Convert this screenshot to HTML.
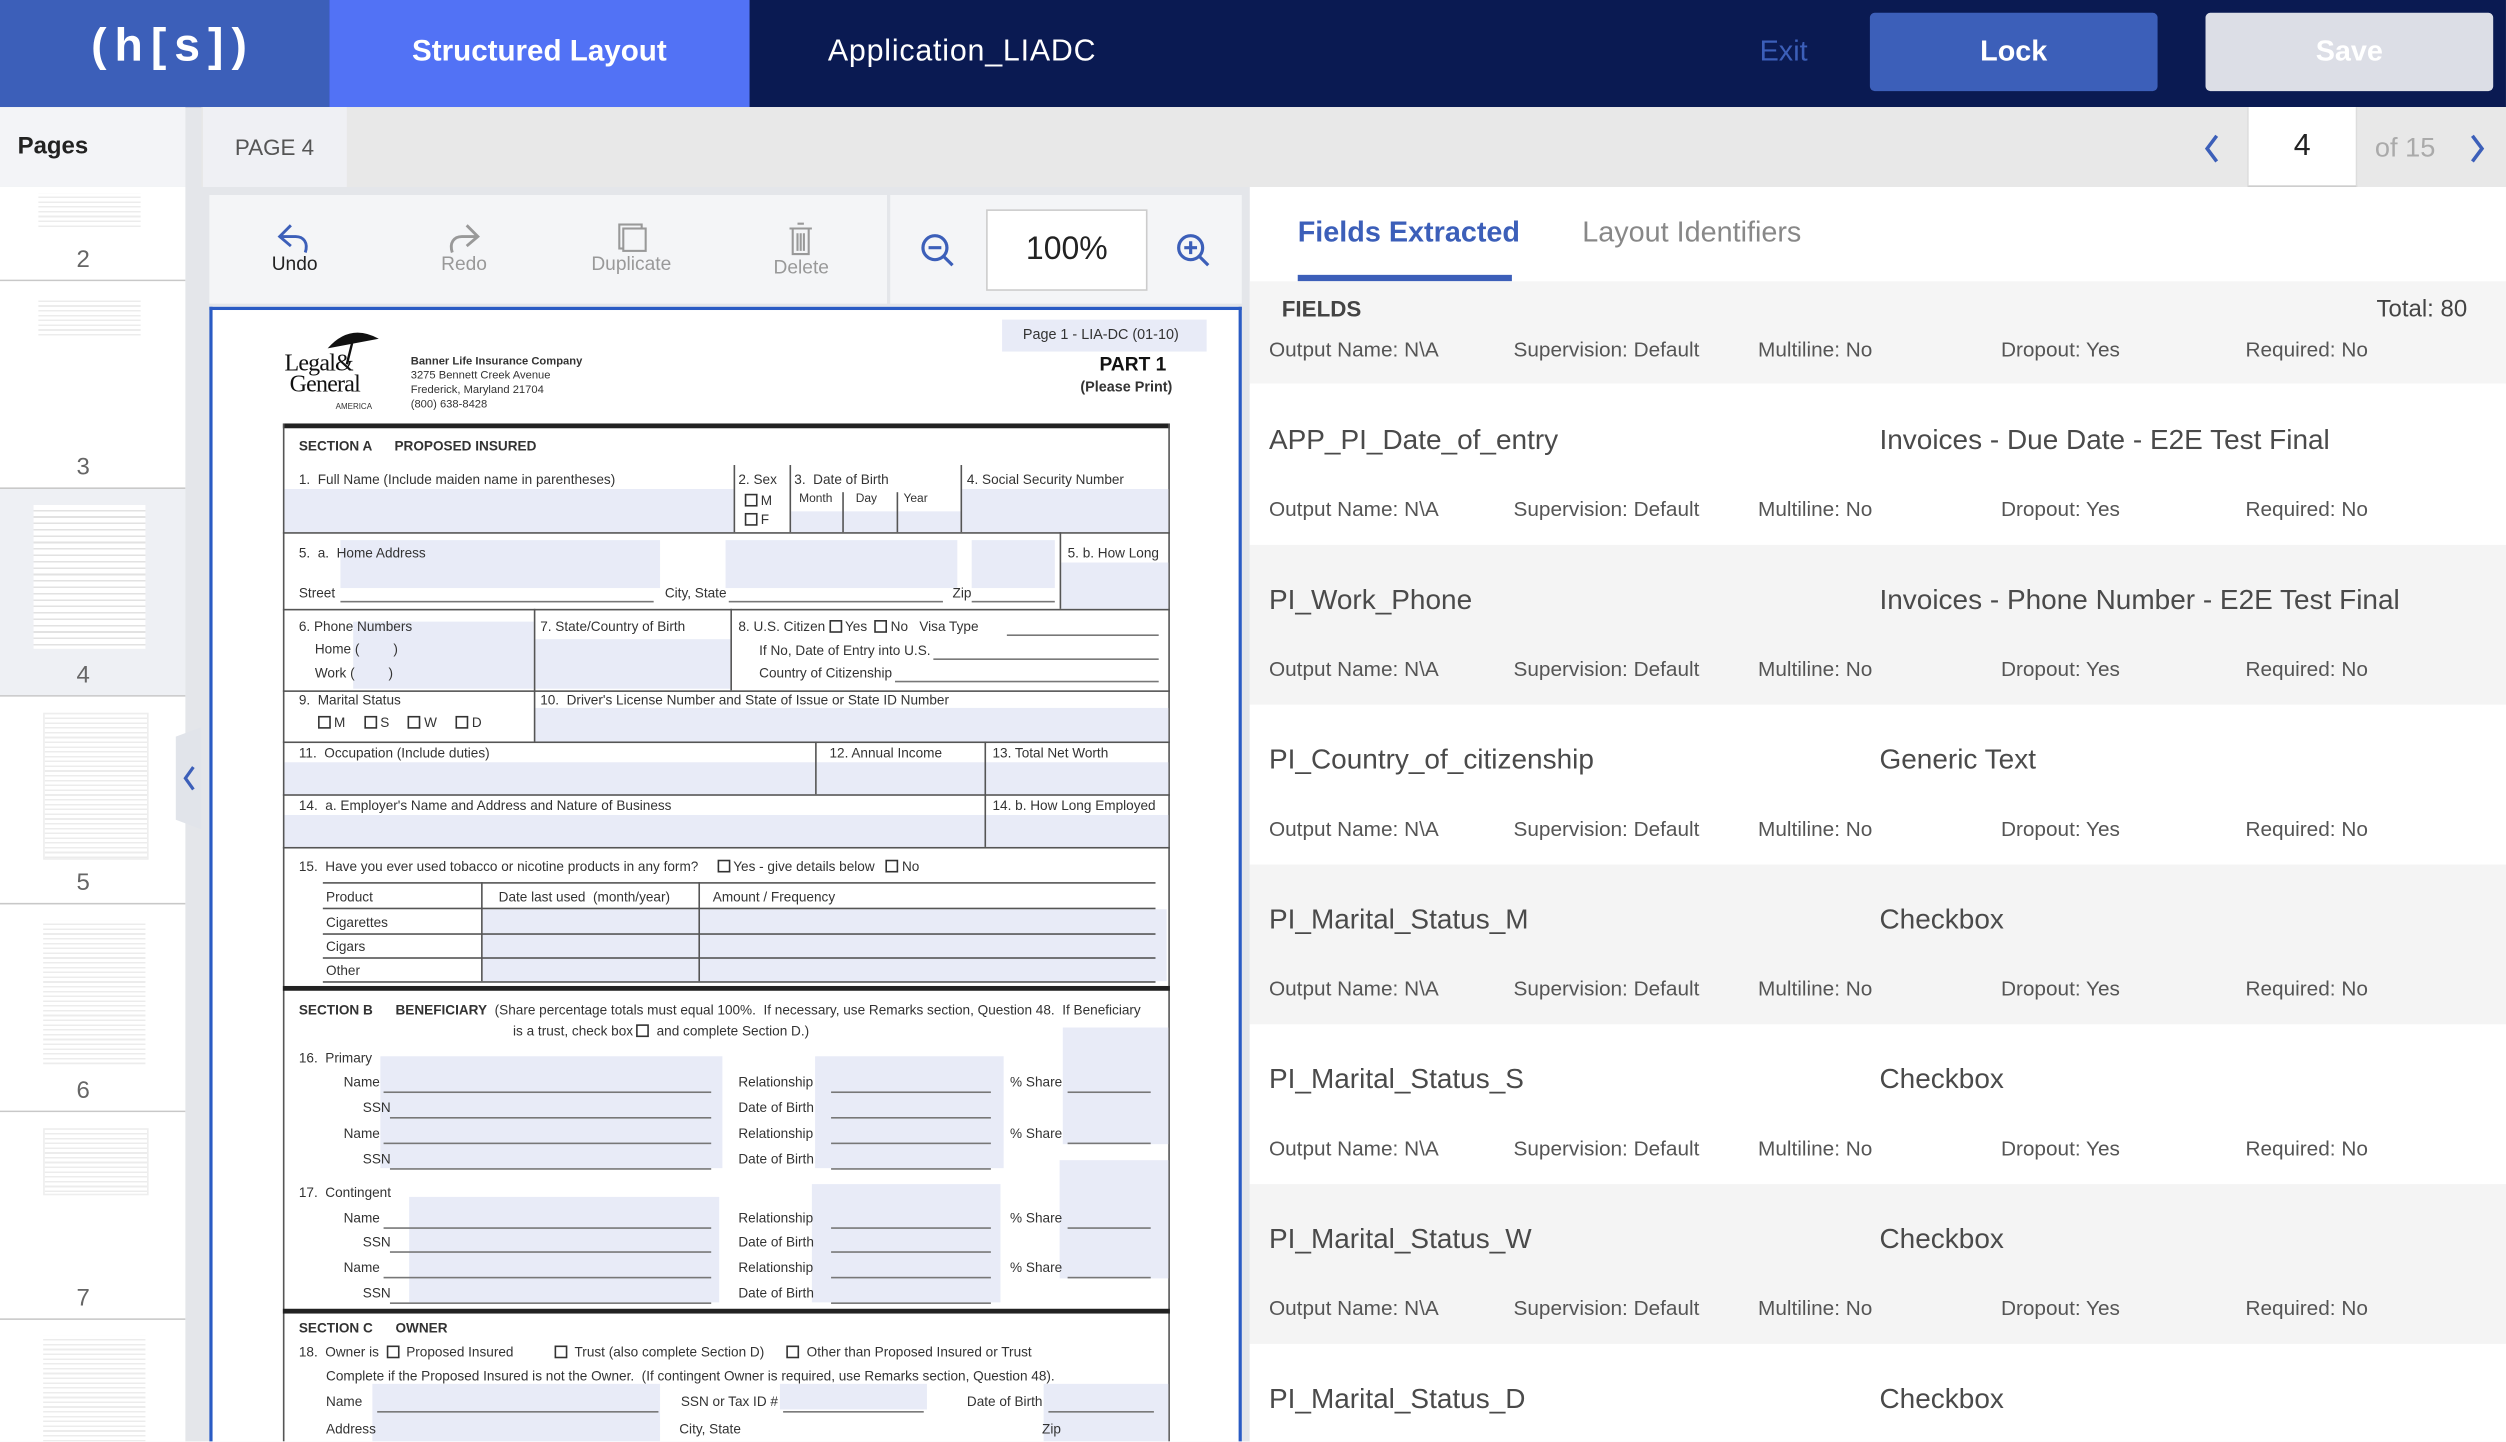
<!DOCTYPE html>
<html><head><meta charset="utf-8">
<style>
html,body{margin:0;padding:0;width:2506px;height:1442px;overflow:hidden;background:#fff}
#o{position:absolute;left:0;top:0;width:2506px;height:1442px;overflow:hidden;contain:paint}
#w{position:absolute;left:0;top:0;width:1568px;height:902px;transform:scale(1.5982,1.598);transform-origin:0 0;font-family:"Liberation Sans",sans-serif;overflow:hidden;background:#e4e6ea}
.a{position:absolute}
.t{position:absolute;white-space:nowrap}
.d{position:absolute;white-space:nowrap;font-family:"Liberation Sans Narrow","Liberation Sans",sans-serif;font-size:8.5px;color:#333;line-height:10px;z-index:2}
.f{position:absolute;background:#e8ebf7}
.h{position:absolute;height:1px;background:#555}
.v{position:absolute;width:1px;background:#555}
.cb{display:inline-block;width:6px;height:6px;border:1px solid #333;vertical-align:-1px;margin-right:2px;background:#fff}
.row{position:absolute;left:782px;width:786px;height:100px}
.row .n{position:absolute;left:12px;top:24px;font-size:17.5px;color:#4a4a4a}
.row .k{position:absolute;left:394px;top:24px;font-size:17.5px;color:#4a4a4a}
.meta{position:absolute;font-size:13px;color:#555}
.thumb{position:absolute;left:0;width:116px;height:129px;background:#fff;border-bottom:1px solid #c8c8c8}
.thumb .num{position:absolute;left:0;width:104px;text-align:center;font-size:15px;color:#666}
.pg{position:absolute;left:24px;width:64px;background:repeating-linear-gradient(#fff 0 2px,#ececec 2px 3px)}
</style></head><body><div id="o"><div id="w">

<div class="a" style="left:0;top:0;width:1568px;height:67px;background:#0a1a52"></div>
<div class="a" style="left:0;top:0;width:206px;height:67px;background:#3c5fb9"></div>
<div class="t" style="left:57px;top:13px;font-size:29px;color:#fff;letter-spacing:5px;font-weight:bold">(h[s])</div>
<div class="a" style="left:206px;top:0;width:263px;height:67px;background:#5272f5"></div>
<div class="t" style="left:206px;width:263px;text-align:center;top:21px;font-size:18.5px;color:#fff;font-weight:bold">Structured Layout</div>
<div class="t" style="left:518px;top:22px;font-size:19px;color:#fff;letter-spacing:0.5px">Application_LIADC</div>
<div class="t" style="left:1101px;top:22px;font-size:18px;color:#3c5fb9">Exit</div>
<div class="a" style="left:1170px;top:8px;width:180px;height:49px;background:#3c5fb9;border-radius:3px;color:#fff;font-size:18px;font-weight:bold;text-align:center;line-height:49px">Lock</div>
<div class="a" style="left:1380px;top:8px;width:180px;height:49px;background:#dcdee6;border-radius:3px;color:#fff;font-size:18px;font-weight:bold;text-align:center;line-height:49px">Save</div>

<div class="a" style="left:126px;top:67px;width:1442px;height:50px;background:#e8e8e8"></div>
<div class="a" style="left:0;top:67px;width:116px;height:50px;background:#f3f4f7"></div>
<div class="t" style="left:11px;top:83px;font-size:15px;color:#222;font-weight:bold">Pages</div>
<div class="a" style="left:127px;top:67px;width:90px;height:50px;background:#eff0f4"></div>
<div class="t" style="left:147px;top:84px;font-size:14px;color:#555">PAGE 4</div>
<svg class="a" style="left:1377px;top:83px" width="14" height="20"><path d="M10 2 L4 10 L10 18" fill="none" stroke="#3c5fb9" stroke-width="2.2"/></svg>
<div class="a" style="left:1406px;top:67px;width:67px;height:49px;background:#fff;border-left:1px solid #ddd;border-right:1px solid #ddd;border-bottom:2px solid #ccc;text-align:center;line-height:50px;font-size:19px;color:#222">4</div>
<div class="t" style="left:1486px;top:83px;font-size:17px;color:#aaa">of 15</div>
<svg class="a" style="left:1543px;top:83px" width="14" height="20"><path d="M4 2 L10 10 L4 18" fill="none" stroke="#3c5fb9" stroke-width="2.2"/></svg>

<div class="a" style="left:0;top:117px;width:116px;height:785px;background:#fff"></div>
<div class="thumb" style="top:117px;height:58px"><div class="pg" style="top:4px;height:22px"></div><div class="num" style="top:37px">2</div></div>
<div class="thumb" style="top:176px"><div class="pg" style="top:10px;height:26px"></div><div class="num" style="top:108px">3</div></div>
<div class="thumb" style="top:306px;background:#eef0f4"><div class="pg" style="left:21px;width:70px;top:10px;height:90px;background:repeating-linear-gradient(#fff 0 3px,#e2e2e2 3px 4px)"></div><div class="num" style="top:108px">4</div></div>
<div class="thumb" style="top:436px"><div class="pg" style="left:27px;top:10px;height:90px;border:1px solid #eee"></div><div class="num" style="top:108px">5</div></div>
<div class="thumb" style="top:566px"><div class="pg" style="left:27px;top:10px;height:90px"></div><div class="num" style="top:108px">6</div></div>
<div class="thumb" style="top:696px"><div class="pg" style="left:27px;top:10px;height:40px;border:1px solid #eee"></div><div class="num" style="top:108px">7</div></div>
<div class="thumb" style="top:826px;height:76px;border:0"><div class="pg" style="left:27px;top:10px;height:66px"></div></div>
<div class="a" style="left:116px;top:117px;width:10px;height:785px;background:#e4e6ea"></div>
<svg class="a" style="left:106px;top:455px" width="20" height="64"><path d="M20 0 L20 64 L4 58 L4 6 Z" fill="#e1e4ea"/><path d="M15 25 L10 32 L15 39" fill="none" stroke="#3c5fb9" stroke-width="2"/></svg>

<div class="a" style="left:131px;top:122px;width:424px;height:68px;background:#f4f5f7"></div>
<div class="a" style="left:557px;top:122px;width:220px;height:68px;background:#f4f5f7"></div>
<svg class="a" style="left:172px;top:138px" width="24" height="22"><path d="M10 3 L3 10 L10 16 M3 10 H13 C18 10 21 14 19 20" fill="none" stroke="#3c5fb9" stroke-width="1.8"/></svg>
<div class="t" style="left:170px;top:158px;font-size:12px;color:#222">Undo</div>
<svg class="a" style="left:278px;top:138px" width="24" height="22"><path d="M14 3 L21 10 L14 16 M21 10 H11 C6 10 3 14 5 20" fill="none" stroke="#999" stroke-width="1.8"/></svg>
<div class="t" style="left:276px;top:158px;font-size:12px;color:#999">Redo</div>
<svg class="a" style="left:385px;top:138px" width="22" height="22"><rect x="2.5" y="2.5" width="14" height="15" fill="none" stroke="#999" stroke-width="1.3"/><rect x="5" y="5" width="14" height="14" fill="#f4f5f7" stroke="#999" stroke-width="1.3"/></svg>
<div class="t" style="left:370px;top:158px;font-size:12px;color:#999">Duplicate</div>
<svg class="a" style="left:492px;top:138px" width="18" height="24"><path d="M7 2 H11 M2 5 H16 M4 5 V21 H14 V5 M7 8 V19 M9 8 V19 M11 8 V19" fill="none" stroke="#999" stroke-width="1.3"/></svg>
<div class="t" style="left:484px;top:160px;font-size:12px;color:#999">Delete</div>
<svg class="a" style="left:575px;top:144px" width="24" height="26"><circle cx="10" cy="11" r="7.5" fill="none" stroke="#3c5fb9" stroke-width="2"/><path d="M6 11 H14 M15.5 16.5 L21 22" stroke="#3c5fb9" stroke-width="2"/></svg>
<div class="a" style="left:617px;top:131px;width:99px;height:49px;background:#fff;border:1px solid #ccc;text-align:center;line-height:49px;font-size:20px;color:#222">100%</div>
<svg class="a" style="left:735px;top:144px" width="24" height="26"><circle cx="10" cy="11" r="7.5" fill="none" stroke="#3c5fb9" stroke-width="2"/><path d="M6 11 H14 M10 7 V15 M15.5 16.5 L21 22" stroke="#3c5fb9" stroke-width="2"/></svg>

<div class="a" style="left:131px;top:192px;width:642px;height:710px;background:#fff;border:1px solid #2a5bc4;border-width:2px 2px 0 2px"></div>
<div class="d" style="left:178px;top:222px;font-family:'Liberation Serif',serif;font-size:15px;line-height:13px;color:#111;letter-spacing:-0.5px">Legal&amp;<br>&nbsp;General</div>
<svg class="a" style="left:203px;top:204px" width="36" height="26"><path d="M2 14 Q16 -2 34 8 Z" fill="#111"/><path d="M18 8 L14 24" stroke="#111" stroke-width="1.5"/></svg>
<div class="d" style="left:210px;top:250px;font-size:5px">AMERICA</div>
<div class="d" style="left:257px;top:222px;font-size:7px;line-height:9px">
<b>Banner Life Insurance Company</b><br>3275 Bennett Creek Avenue<br>Frederick, Maryland 21704<br>(800) 638-8428</div>
<div class="f" style="left:627px;top:200px;width:128px;height:20px"></div>
<div class="d" style="left:640px;top:204px;font-size:9px">Page 1 - LIA-DC (01-10)</div>
<div class="d" style="left:688px;top:221px;font-size:12px;font-weight:bold;color:#111;line-height:14px">PART 1</div>
<div class="d" style="left:676px;top:237px;font-size:9px;font-weight:bold">(Please Print)</div>

<div class="a" style="left:177px;top:265px;width:555px;height:3px;background:#222"></div>
<div class="v" style="left:177px;top:265px;height:637px"></div>
<div class="v" style="left:731px;top:265px;height:637px"></div>
<div class="d" style="left:187px;top:274px;font-weight:bold">SECTION A &nbsp;&nbsp;&nbsp;&nbsp; PROPOSED INSURED</div>

<div class="f" style="left:178px;top:306px;width:281px;height:27px"></div>
<div class="f" style="left:495px;top:320px;width:106px;height:13px"></div>
<div class="f" style="left:602px;top:306px;width:129px;height:27px"></div>
<div class="f" style="left:213px;top:338px;width:200px;height:30px"></div>
<div class="f" style="left:454px;top:338px;width:145px;height:30px"></div>
<div class="f" style="left:608px;top:338px;width:52px;height:30px"></div>
<div class="f" style="left:664px;top:352px;width:67px;height:29px"></div>
<div class="f" style="left:221px;top:389px;width:113px;height:42px"></div>
<div class="f" style="left:335px;top:400px;width:122px;height:31px"></div>
<div class="f" style="left:335px;top:443px;width:396px;height:21px"></div>
<div class="f" style="left:178px;top:477px;width:332px;height:20px"></div>
<div class="f" style="left:511px;top:477px;width:220px;height:20px"></div>
<div class="f" style="left:178px;top:510px;width:438px;height:20px"></div>
<div class="f" style="left:617px;top:510px;width:114px;height:20px"></div>

<div class="h" style="left:177px;top:333px;width:555px"></div>
<div class="h" style="left:177px;top:381px;width:555px"></div>
<div class="h" style="left:177px;top:432px;width:555px"></div>
<div class="h" style="left:177px;top:464px;width:555px"></div>
<div class="h" style="left:177px;top:497px;width:555px"></div>
<div class="h" style="left:177px;top:530px;width:555px"></div>
<div class="v" style="left:459px;top:291px;height:42px"></div>
<div class="v" style="left:494px;top:291px;height:42px"></div>
<div class="v" style="left:601px;top:291px;height:42px"></div>
<div class="v" style="left:527px;top:308px;height:25px"></div>
<div class="v" style="left:561px;top:308px;height:25px"></div>
<div class="v" style="left:663px;top:333px;height:48px"></div>
<div class="v" style="left:334px;top:381px;height:83px"></div>
<div class="v" style="left:457px;top:381px;height:51px"></div>
<div class="v" style="left:510px;top:464px;height:33px"></div>
<div class="v" style="left:616px;top:464px;height:66px"></div>

<div class="d" style="left:187px;top:295px">1. &nbsp;Full Name (Include maiden name in parentheses)</div>
<div class="d" style="left:462px;top:295px">2. Sex</div>
<div class="d" style="left:466px;top:308px"><span class="cb"></span>M</div>
<div class="d" style="left:466px;top:320px"><span class="cb"></span>F</div>
<div class="d" style="left:497px;top:295px">3. &nbsp;Date of Birth</div>
<div class="d" style="left:500px;top:307px;font-size:7.5px">Month &nbsp;&nbsp;&nbsp;&nbsp;&nbsp; Day &nbsp;&nbsp;&nbsp;&nbsp;&nbsp;&nbsp; Year</div>
<div class="d" style="left:605px;top:295px">4. Social Security Number</div>
<div class="d" style="left:187px;top:341px">5. &nbsp;a. &nbsp;Home Address</div>
<div class="d" style="left:668px;top:341px">5. b. How Long</div>
<div class="d" style="left:187px;top:366px">Street</div>
<div class="h" style="left:213px;top:376px;width:196px;background:#777"></div>
<div class="d" style="left:416px;top:366px">City, State</div>
<div class="h" style="left:456px;top:376px;width:134px;background:#777"></div>
<div class="d" style="left:596px;top:366px">Zip</div>
<div class="h" style="left:608px;top:376px;width:52px;background:#777"></div>
<div class="d" style="left:187px;top:387px">6. Phone Numbers</div>
<div class="d" style="left:197px;top:401px">Home ( &nbsp;&nbsp;&nbsp;&nbsp;&nbsp;&nbsp;&nbsp; )</div>
<div class="d" style="left:197px;top:416px">Work ( &nbsp;&nbsp;&nbsp;&nbsp;&nbsp;&nbsp;&nbsp; )</div>
<div class="d" style="left:338px;top:387px">7. State/Country of Birth</div>
<div class="d" style="left:462px;top:387px">8. U.S. Citizen <span class="cb"></span>Yes &nbsp;<span class="cb"></span>No &nbsp;&nbsp;Visa Type</div>
<div class="h" style="left:630px;top:397px;width:95px;background:#777"></div>
<div class="d" style="left:475px;top:402px">If No, Date of Entry into U.S.</div>
<div class="h" style="left:584px;top:412px;width:141px;background:#777"></div>
<div class="d" style="left:475px;top:416px">Country of Citizenship</div>
<div class="h" style="left:560px;top:426px;width:165px;background:#777"></div>
<div class="d" style="left:187px;top:433px">9. &nbsp;Marital Status</div>
<div class="d" style="left:199px;top:447px"><span class="cb"></span>M &nbsp;&nbsp;&nbsp;&nbsp;<span class="cb"></span>S &nbsp;&nbsp;&nbsp;&nbsp;<span class="cb"></span>W &nbsp;&nbsp;&nbsp;&nbsp;<span class="cb"></span>D</div>
<div class="d" style="left:338px;top:433px">10. &nbsp;Driver's License Number and State of Issue or State ID Number</div>
<div class="d" style="left:187px;top:466px">11. &nbsp;Occupation (Include duties)</div>
<div class="d" style="left:519px;top:466px">12. Annual Income</div>
<div class="d" style="left:621px;top:466px">13. Total Net Worth</div>
<div class="d" style="left:187px;top:499px">14. &nbsp;a. Employer's Name and Address and Nature of Business</div>
<div class="d" style="left:621px;top:499px">14. b. How Long Employed</div>
<div class="d" style="left:187px;top:537px">15. &nbsp;Have you ever used tobacco or nicotine products in any form? &nbsp;&nbsp;&nbsp;&nbsp;<span class="cb"></span>Yes - give details below &nbsp;&nbsp;<span class="cb"></span>No</div>
<div class="f" style="left:302px;top:569px;width:428px;height:45px"></div>
<div class="h" style="left:202px;top:552px;width:521px"></div>
<div class="h" style="left:202px;top:568px;width:521px"></div>
<div class="h" style="left:202px;top:584px;width:521px"></div>
<div class="h" style="left:202px;top:599px;width:521px"></div>
<div class="h" style="left:202px;top:614px;width:521px"></div>
<div class="v" style="left:301px;top:552px;height:62px"></div>
<div class="v" style="left:437px;top:552px;height:62px"></div>
<div class="d" style="left:204px;top:556px">Product</div>
<div class="d" style="left:312px;top:556px">Date last used &nbsp;(month/year)</div>
<div class="d" style="left:446px;top:556px">Amount / Frequency</div>
<div class="d" style="left:204px;top:572px">Cigarettes</div>
<div class="d" style="left:204px;top:587px">Cigars</div>
<div class="d" style="left:204px;top:602px">Other</div>
<div class="a" style="left:177px;top:617px;width:555px;height:3px;background:#222"></div>

<div class="d" style="left:187px;top:627px"><b>SECTION B &nbsp;&nbsp;&nbsp;&nbsp; BENEFICIARY</b> &nbsp;(Share percentage totals must equal 100%. &nbsp;If necessary, use Remarks section, Question 48. &nbsp;If Beneficiary</div>
<div class="d" style="left:321px;top:640px">is a trust, check box <span class="cb"></span> and complete Section D.)</div>
<div class="f" style="left:238px;top:661px;width:214px;height:70px"></div>
<div class="f" style="left:510px;top:661px;width:118px;height:70px"></div>
<div class="f" style="left:665px;top:643px;width:66px;height:73px"></div>
<div class="f" style="left:256px;top:749px;width:194px;height:66px"></div>
<div class="f" style="left:508px;top:741px;width:118px;height:74px"></div>
<div class="f" style="left:663px;top:726px;width:68px;height:74px"></div>
<div class="d" style="left:187px;top:657px">16. &nbsp;Primary</div>
<div class="d" style="left:187px;top:741px">17. &nbsp;Contingent</div>
<div class="d" style="left:215px;top:672px">Name</div><div class="h" style="left:240px;top:683px;width:205px;background:#777"></div>
<div class="d" style="left:227px;top:688px">SSN</div><div class="h" style="left:244px;top:699px;width:201px;background:#777"></div>
<div class="d" style="left:215px;top:704px">Name</div><div class="h" style="left:240px;top:715px;width:205px;background:#777"></div>
<div class="d" style="left:227px;top:720px">SSN</div><div class="h" style="left:244px;top:731px;width:201px;background:#777"></div>
<div class="d" style="left:462px;top:672px">Relationship</div><div class="h" style="left:520px;top:683px;width:100px;background:#777"></div>
<div class="d" style="left:462px;top:688px">Date of Birth</div><div class="h" style="left:520px;top:699px;width:100px;background:#777"></div>
<div class="d" style="left:462px;top:704px">Relationship</div><div class="h" style="left:520px;top:715px;width:100px;background:#777"></div>
<div class="d" style="left:462px;top:720px">Date of Birth</div><div class="h" style="left:520px;top:731px;width:100px;background:#777"></div>
<div class="d" style="left:632px;top:672px">% Share</div><div class="h" style="left:668px;top:683px;width:52px;background:#777"></div>
<div class="d" style="left:632px;top:704px">% Share</div><div class="h" style="left:668px;top:715px;width:52px;background:#777"></div>
<div class="d" style="left:215px;top:757px">Name</div><div class="h" style="left:240px;top:768px;width:205px;background:#777"></div>
<div class="d" style="left:227px;top:772px">SSN</div><div class="h" style="left:244px;top:783px;width:201px;background:#777"></div>
<div class="d" style="left:215px;top:788px">Name</div><div class="h" style="left:240px;top:799px;width:205px;background:#777"></div>
<div class="d" style="left:227px;top:804px">SSN</div><div class="h" style="left:244px;top:815px;width:201px;background:#777"></div>
<div class="d" style="left:462px;top:757px">Relationship</div><div class="h" style="left:520px;top:768px;width:100px;background:#777"></div>
<div class="d" style="left:462px;top:772px">Date of Birth</div><div class="h" style="left:520px;top:783px;width:100px;background:#777"></div>
<div class="d" style="left:462px;top:788px">Relationship</div><div class="h" style="left:520px;top:799px;width:100px;background:#777"></div>
<div class="d" style="left:462px;top:804px">Date of Birth</div><div class="h" style="left:520px;top:815px;width:100px;background:#777"></div>
<div class="d" style="left:632px;top:757px">% Share</div><div class="h" style="left:668px;top:768px;width:52px;background:#777"></div>
<div class="d" style="left:632px;top:788px">% Share</div><div class="h" style="left:668px;top:799px;width:52px;background:#777"></div>
<div class="a" style="left:177px;top:819px;width:555px;height:3px;background:#222"></div>

<div class="d" style="left:187px;top:826px;font-weight:bold">SECTION C &nbsp;&nbsp;&nbsp;&nbsp; OWNER</div>
<div class="d" style="left:187px;top:841px">18. &nbsp;Owner is &nbsp;<span class="cb"></span> Proposed Insured &nbsp;&nbsp;&nbsp;&nbsp;&nbsp;&nbsp;&nbsp;&nbsp;&nbsp;&nbsp;<span class="cb"></span> Trust (also complete Section D) &nbsp;&nbsp;&nbsp;&nbsp;&nbsp;<span class="cb"></span> Other than Proposed Insured or Trust</div>
<div class="d" style="left:204px;top:856px">Complete if the Proposed Insured is not the Owner. &nbsp;(If contingent Owner is required, use Remarks section, Question 48).</div>
<div class="f" style="left:233px;top:866px;width:180px;height:36px"></div>
<div class="f" style="left:488px;top:866px;width:92px;height:16px"></div>
<div class="f" style="left:653px;top:866px;width:78px;height:36px"></div>
<div class="d" style="left:204px;top:872px">Name</div><div class="h" style="left:236px;top:883px;width:176px;background:#777"></div>
<div class="d" style="left:426px;top:872px">SSN or Tax ID #</div><div class="h" style="left:490px;top:883px;width:88px;background:#777"></div>
<div class="d" style="left:605px;top:872px">Date of Birth</div><div class="h" style="left:656px;top:883px;width:66px;background:#777"></div>
<div class="d" style="left:204px;top:889px">Address</div>
<div class="d" style="left:425px;top:889px">City, State</div>
<div class="d" style="left:652px;top:889px">Zip</div>

<div class="a" style="left:782px;top:117px;width:786px;height:785px;background:#fff"></div>
<div class="t" style="left:812px;top:135px;font-size:18px;color:#3c5fb9;font-weight:bold">Fields Extracted</div>
<div class="t" style="left:990px;top:135px;font-size:18px;color:#888">Layout Identifiers</div>
<div class="a" style="left:812px;top:172px;width:134px;height:4px;background:#3c5fb9"></div>
<div class="a" style="left:782px;top:176px;width:786px;height:64px;background:#f5f5f5"></div>
<div class="t" style="left:802px;top:185px;font-size:14px;color:#444;font-weight:bold">FIELDS</div>
<div class="t" style="left:1487px;top:185px;font-size:15px;color:#444">Total: 80</div>
<div class="meta" style="left:794px;top:211px">Output Name: N\A</div><div class="meta" style="left:947px;top:211px">Supervision: Default</div><div class="meta" style="left:1100px;top:211px">Multiline: No</div><div class="meta" style="left:1252px;top:211px">Dropout: Yes</div><div class="meta" style="left:1405px;top:211px">Required: No</div>

<div class="row" style="top:241px;background:#fff"><div class="n">APP_PI_Date_of_entry</div><div class="k">Invoices - Due Date - E2E Test Final</div>
<div class="meta" style="left:12px;top:70px">Output Name: N\A</div><div class="meta" style="left:165px;top:70px">Supervision: Default</div><div class="meta" style="left:318px;top:70px">Multiline: No</div><div class="meta" style="left:470px;top:70px">Dropout: Yes</div><div class="meta" style="left:623px;top:70px">Required: No</div></div>
<div class="row" style="top:341px;background:#f4f4f4"><div class="n">PI_Work_Phone</div><div class="k">Invoices - Phone Number - E2E Test Final</div>
<div class="meta" style="left:12px;top:70px">Output Name: N\A</div><div class="meta" style="left:165px;top:70px">Supervision: Default</div><div class="meta" style="left:318px;top:70px">Multiline: No</div><div class="meta" style="left:470px;top:70px">Dropout: Yes</div><div class="meta" style="left:623px;top:70px">Required: No</div></div>
<div class="row" style="top:441px;background:#fff"><div class="n">PI_Country_of_citizenship</div><div class="k">Generic Text</div>
<div class="meta" style="left:12px;top:70px">Output Name: N\A</div><div class="meta" style="left:165px;top:70px">Supervision: Default</div><div class="meta" style="left:318px;top:70px">Multiline: No</div><div class="meta" style="left:470px;top:70px">Dropout: Yes</div><div class="meta" style="left:623px;top:70px">Required: No</div></div>
<div class="row" style="top:541px;background:#f4f4f4"><div class="n">PI_Marital_Status_M</div><div class="k">Checkbox</div>
<div class="meta" style="left:12px;top:70px">Output Name: N\A</div><div class="meta" style="left:165px;top:70px">Supervision: Default</div><div class="meta" style="left:318px;top:70px">Multiline: No</div><div class="meta" style="left:470px;top:70px">Dropout: Yes</div><div class="meta" style="left:623px;top:70px">Required: No</div></div>
<div class="row" style="top:641px;background:#fff"><div class="n">PI_Marital_Status_S</div><div class="k">Checkbox</div>
<div class="meta" style="left:12px;top:70px">Output Name: N\A</div><div class="meta" style="left:165px;top:70px">Supervision: Default</div><div class="meta" style="left:318px;top:70px">Multiline: No</div><div class="meta" style="left:470px;top:70px">Dropout: Yes</div><div class="meta" style="left:623px;top:70px">Required: No</div></div>
<div class="row" style="top:741px;background:#f4f4f4"><div class="n">PI_Marital_Status_W</div><div class="k">Checkbox</div>
<div class="meta" style="left:12px;top:70px">Output Name: N\A</div><div class="meta" style="left:165px;top:70px">Supervision: Default</div><div class="meta" style="left:318px;top:70px">Multiline: No</div><div class="meta" style="left:470px;top:70px">Dropout: Yes</div><div class="meta" style="left:623px;top:70px">Required: No</div></div>
<div class="row" style="top:841px;height:61px;background:#fff"><div class="n">PI_Marital_Status_D</div><div class="k">Checkbox</div></div>

</div></div></body></html>
